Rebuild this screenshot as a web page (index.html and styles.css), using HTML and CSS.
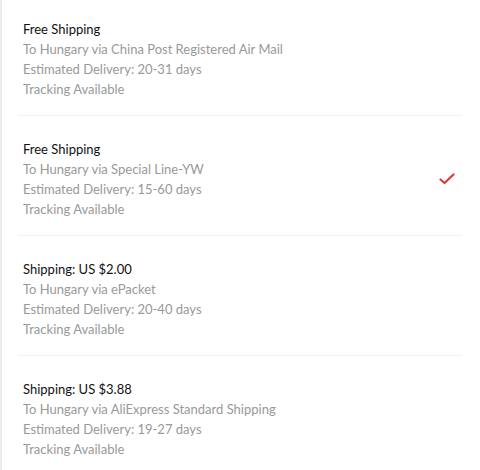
FILE: index.html
```html
<!DOCTYPE html>
<html>
<head>
<meta charset="utf-8">
<link rel="stylesheet" href="styles.css">
</head>
<body>
<div class="page">
  <ul class="list">
    <li class="item">
      <div class="info">
        <div class="title">Free Shipping</div>
        <div class="line">To Hungary via China Post Registered Air Mail</div>
        <div class="line">Estimated Delivery: 20-31 days</div>
        <div class="line">Tracking Available</div>
      </div>
    </li>
    <li class="item">
      <div class="info">
        <div class="title">Free Shipping</div>
        <div class="line">To Hungary via Special Line-YW</div>
        <div class="line">Estimated Delivery: 15-60 days</div>
        <div class="line">Tracking Available</div>
      </div>
      <svg class="check" width="16" height="12" viewBox="0 0 16 12"><path d="M1.5 6.5 L5.5 10 L14.5 1.5" fill="none" stroke="#e0383e" stroke-width="2.2" stroke-linecap="round" stroke-linejoin="round"/></svg>
    </li>
    <li class="item">
      <div class="info">
        <div class="title">Shipping: US $2.00</div>
        <div class="line">To Hungary via ePacket</div>
        <div class="line">Estimated Delivery: 20-40 days</div>
        <div class="line">Tracking Available</div>
      </div>
    </li>
    <li class="item">
      <div class="info">
        <div class="title">Shipping: US $3.88</div>
        <div class="line">To Hungary via AliExpress Standard Shipping</div>
        <div class="line">Estimated Delivery: 19-27 days</div>
        <div class="line">Tracking Available</div>
      </div>
    </li>
  </ul>
</div>
</body>
</html>
```

FILE: styles.css
```css
html, body {
  margin: 0;
  padding: 0;
  background: #ffffff;
}
.page {
  height: 470px;
  border-left: 2px solid #ececec;
  box-sizing: border-box;
  font-family: Lato, "Open Sans", sans-serif;
  font-size: 13px;
  line-height: 20px;
}
.list {
  list-style: none;
  margin: 0;
  padding: 0 18px 0 16px;
}
.item {
  display: flex;
  align-items: center;
  justify-content: space-between;
  padding: 23px 7px 16px 5px;
  border-bottom: 1px solid #f1f1f1;
}
.item:first-child {
  padding-top: 19px;
}
.item:last-child {
  border-bottom: none;
}
.title {
  color: #111111;
}
.line {
  color: #999999;
}
.check {
  display: block;
}
```
